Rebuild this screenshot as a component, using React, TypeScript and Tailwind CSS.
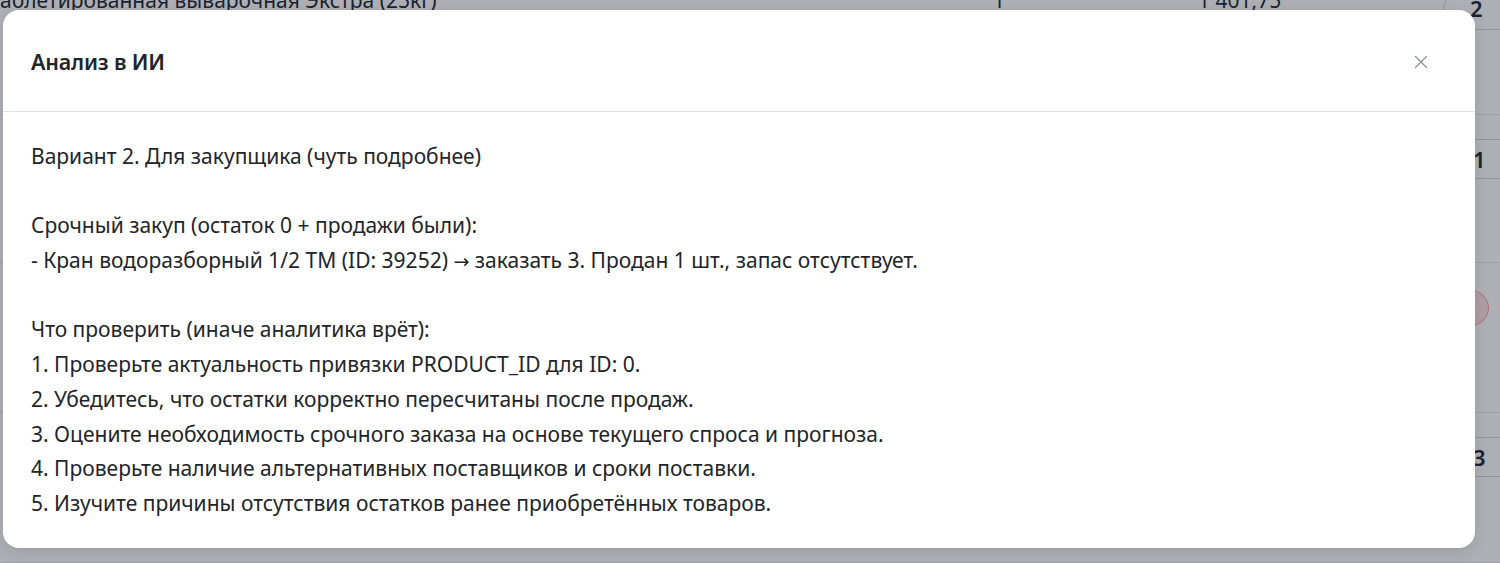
import { X } from "lucide-react";

const lines = [
  "Вариант 2. Для закупщика (чуть подробнее)",
  "",
  "Срочный закуп (остаток 0 + продажи были):",
  "- Кран водоразборный 1/2 ТМ (ID: 39252) → заказать 3. Продан 1 шт., запас отсутствует.",
  "",
  "Что проверить (иначе аналитика врёт):",
  "1. Проверьте актуальность привязки PRODUCT_ID для ID: 0.",
  "2. Убедитесь, что остатки корректно пересчитаны после продаж.",
  "3. Оцените необходимость срочного заказа на основе текущего спроса и прогноза.",
  "4. Проверьте наличие альтернативных поставщиков и сроки поставки.",
  "5. Изучите причины отсутствия остатков ранее приобретённых товаров.",
];

function Line({ text }: { text: string }) {
  const parts = text.split("→");
  if (parts.length === 1) return <>{text}</>;
  return (
    <>
      {parts[0]}
      <span style={{ fontFamily: '"DejaVu Sans", sans-serif' }} className="text-[19px]">
        →
      </span>
      {parts[1]}
    </>
  );
}

function BackgroundTable() {
  return (
    <div className="flex flex-col text-[#1f2937]">
      <div className="relative flex h-[115px] items-start border-b border-gray-200">
        <span className="-mt-[15px] text-[21px] leading-[30px]">
          аблетированная выварочная Экстра (25кг)
        </span>
        <span className="absolute left-[993px] -top-[15px] text-[21px] leading-[30px]">1</span>
        <span className="absolute left-[1198px] -top-[15px] text-[21px] leading-[30px]">1 401,75</span>
        <span className="absolute left-[1443px] -top-[10px] flex h-[40px] w-[100px] items-end justify-start rounded-full border border-gray-300 pb-[4px] pl-[26px] text-[22px] font-semibold">
          2
        </span>
      </div>
      <div className="relative h-[148px] border-b border-gray-200">
        <span className="absolute left-[1440px] top-[24px] flex h-[40px] w-[100px] items-center justify-start rounded-full border border-gray-300 pl-[32px] text-[22px] font-semibold">
          1
        </span>
      </div>
      <div className="relative h-[150px] border-b border-gray-200">
        <span className="absolute left-[1453px] top-[27px] h-[36px] w-[36px] rounded-full border border-red-300 bg-red-100" />
      </div>
      <div className="relative h-[150px] border-b border-gray-200">
        <span className="absolute left-[1440px] top-[24px] flex h-[40px] w-[100px] items-center justify-start rounded-full border border-gray-300 pl-[32px] text-[22px] font-semibold">
          3
        </span>
      </div>
    </div>
  );
}

export default function App() {
  return (
    <div
      className="relative h-[563px] w-[1500px] overflow-hidden bg-white"
      style={{ fontFamily: '"Noto Sans", "Open Sans", sans-serif' }}
    >
      <BackgroundTable />
      <div className="absolute inset-0 bg-[rgba(17,24,39,0.34)]">
        <div className="ml-[3px] mt-[10px] w-[1472px] overflow-hidden rounded-[16px] bg-white shadow-[0_4px_16px_rgba(0,0,0,0.12)]">
          <div className="flex h-[102px] items-center justify-between border-b border-[#dee2e6] pl-[28px] pr-[42px] pt-[3px]">
            <h2 className="text-[21.5px] font-semibold tracking-[-0.2px] text-[#212529]">Анализ в ИИ</h2>
            <button className="flex h-[24px] w-[24px] items-center justify-center text-[#8a8f96]">
              <X size={22} strokeWidth={1.3} />
            </button>
          </div>
          <div className="px-[28px] pb-[27px] pt-[27px] text-[21px] leading-[34.7px] text-[#212529]">
            {lines.map((line, i) => (
              <div key={i} className="h-[34.7px] whitespace-pre">
                <Line text={line} />
              </div>
            ))}
          </div>
        </div>
      </div>
    </div>
  );
}
